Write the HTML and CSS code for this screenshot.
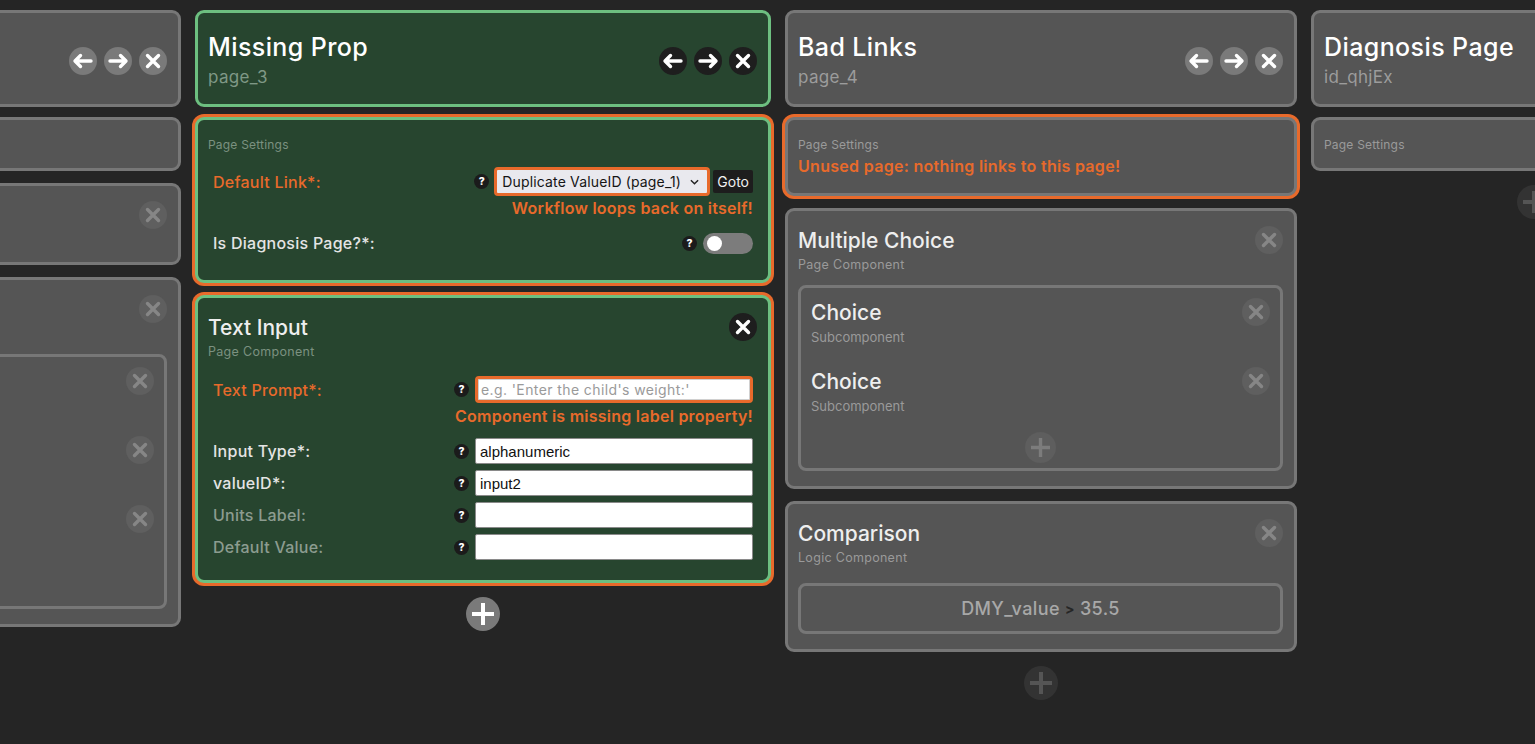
FILE: index.html
```html
<!DOCTYPE html>
<html lang="en">
<head>
<meta charset="utf-8">
<title>Workflow editor</title>
<link rel="stylesheet" href="styles.css">
</head>
<body>
<div class="board">

  <!-- Column A (scrolled mostly off screen; its texts lie outside the view) -->
  <section class="col col-a">
    <div class="card head">
      <div class="head-text">
        <div class="head-title"></div>
        <div class="head-sub"></div>
      </div>
      <div class="btns">
        <svg class="ibtn light" viewBox="0 0 28 28"><circle cx="14" cy="14" r="14"/><path d="M22 14H6.5M11.5 8.5L6 14l5.5 5.5"/></svg>
        <svg class="ibtn light" viewBox="0 0 28 28"><circle cx="14" cy="14" r="14"/><path d="M6 14h15.5M16.5 8.5L22 14l-5.5 5.5"/></svg>
        <svg class="ibtn light" viewBox="0 0 28 28"><circle cx="14" cy="14" r="14"/><path d="M8.5 8.5l11 11M19.5 8.5l-11 11"/></svg>
      </div>
    </div>
    <div class="card settings short">
      <div class="sec-label"></div>
    </div>
    <div class="card comp">
      <div class="comp-head">
        <div class="comp-title"></div>
        <svg class="ibtn faint" viewBox="0 0 28 28"><circle cx="14" cy="14" r="14"/><path d="M8.5 8.5l11 11M19.5 8.5l-11 11"/></svg>
      </div>
      <div class="comp-sub"></div>
    </div>
    <div class="card comp mc">
      <div class="comp-head">
        <div class="comp-title"></div>
        <svg class="ibtn faint" viewBox="0 0 28 28"><circle cx="14" cy="14" r="14"/><path d="M8.5 8.5l11 11M19.5 8.5l-11 11"/></svg>
      </div>
      <div class="comp-sub"></div>
      <div class="subbox">
        <div class="choice">
          <div class="comp-head"><div class="comp-title"></div><svg class="ibtn faint" viewBox="0 0 28 28"><circle cx="14" cy="14" r="14"/><path d="M8.5 8.5l11 11M19.5 8.5l-11 11"/></svg></div>
          <div class="comp-sub"></div>
        </div>
        <div class="choice">
          <div class="comp-head"><div class="comp-title"></div><svg class="ibtn faint" viewBox="0 0 28 28"><circle cx="14" cy="14" r="14"/><path d="M8.5 8.5l11 11M19.5 8.5l-11 11"/></svg></div>
          <div class="comp-sub"></div>
        </div>
        <div class="choice">
          <div class="comp-head"><div class="comp-title"></div><svg class="ibtn faint" viewBox="0 0 28 28"><circle cx="14" cy="14" r="14"/><path d="M8.5 8.5l11 11M19.5 8.5l-11 11"/></svg></div>
          <div class="comp-sub"></div>
        </div>
        <svg class="add-sm" viewBox="0 0 31 31"><circle cx="15.5" cy="15.5" r="15.5"/><path d="M15.5 6v19M6 15.5h19"/></svg>
      </div>
    </div>
  </section>

  <!-- Column B: Missing Prop -->
  <section class="col col-b">
    <div class="card head green">
      <div class="head-text">
        <div class="head-title">Missing Prop</div>
        <div class="head-sub">page_3</div>
      </div>
      <div class="btns">
        <svg class="ibtn dark" viewBox="0 0 28 28"><circle cx="14" cy="14" r="14"/><path d="M22 14H6.5M11.5 8.5L6 14l5.5 5.5"/></svg>
        <svg class="ibtn dark" viewBox="0 0 28 28"><circle cx="14" cy="14" r="14"/><path d="M6 14h15.5M16.5 8.5L22 14l-5.5 5.5"/></svg>
        <svg class="ibtn dark" viewBox="0 0 28 28"><circle cx="14" cy="14" r="14"/><path d="M8.5 8.5l11 11M19.5 8.5l-11 11"/></svg>
      </div>
    </div>

    <div class="card settings green err">
      <div class="sec-label">Page Settings</div>
      <div class="frow bad link-row">
        <label>Default Link*:</label>
        <span class="q">?</span>
        <div class="select"><span>Duplicate ValueID (page_1)</span><svg viewBox="0 0 10 6"><path d="M1 1l4 4 4-4"/></svg></div>
        <button class="goto">Goto</button>
      </div>
      <div class="errmsg">Workflow loops back on itself!</div>
      <div class="frow diag-row">
        <label>Is Diagnosis Page?*:</label>
        <span class="q">?</span>
        <div class="toggle"><span class="knob"></span></div>
      </div>
    </div>

    <div class="card comp green err ti">
      <div class="comp-head">
        <div class="comp-title">Text Input</div>
        <svg class="ibtn dark" viewBox="0 0 28 28"><circle cx="14" cy="14" r="14"/><path d="M8.5 8.5l11 11M19.5 8.5l-11 11"/></svg>
      </div>
      <div class="comp-sub">Page Component</div>
      <div class="frow bad prompt-row">
        <label>Text Prompt*:</label>
        <span class="q">?</span>
        <input class="field bad-field" type="text" placeholder="e.g. 'Enter the child's weight:'">
      </div>
      <div class="errmsg">Component is missing label property!</div>
      <div class="frow first-field">
        <label>Input Type*:</label>
        <span class="q">?</span>
        <input class="field" type="text" value="alphanumeric">
      </div>
      <div class="frow next-field">
        <label>valueID*:</label>
        <span class="q">?</span>
        <input class="field" type="text" value="input2">
      </div>
      <div class="frow next-field optional">
        <label>Units Label:</label>
        <span class="q">?</span>
        <input class="field" type="text">
      </div>
      <div class="frow next-field optional">
        <label>Default Value:</label>
        <span class="q">?</span>
        <input class="field" type="text">
      </div>
    </div>

    <svg class="add add-light" viewBox="0 0 34 34"><circle cx="17" cy="17" r="17"/><path d="M17 6v22M6 17h22"/></svg>
  </section>

  <!-- Column C: Bad Links -->
  <section class="col col-c">
    <div class="card head">
      <div class="head-text">
        <div class="head-title">Bad Links</div>
        <div class="head-sub">page_4</div>
      </div>
      <div class="btns">
        <svg class="ibtn light" viewBox="0 0 28 28"><circle cx="14" cy="14" r="14"/><path d="M22 14H6.5M11.5 8.5L6 14l5.5 5.5"/></svg>
        <svg class="ibtn light" viewBox="0 0 28 28"><circle cx="14" cy="14" r="14"/><path d="M6 14h15.5M16.5 8.5L22 14l-5.5 5.5"/></svg>
        <svg class="ibtn light" viewBox="0 0 28 28"><circle cx="14" cy="14" r="14"/><path d="M8.5 8.5l11 11M19.5 8.5l-11 11"/></svg>
      </div>
    </div>

    <div class="card settings err unused">
      <div class="sec-label">Page Settings</div>
      <div class="unused-msg">Unused page: nothing links to this page!</div>
    </div>

    <div class="card comp mc">
      <div class="comp-head">
        <div class="comp-title">Multiple Choice</div>
        <svg class="ibtn faint" viewBox="0 0 28 28"><circle cx="14" cy="14" r="14"/><path d="M8.5 8.5l11 11M19.5 8.5l-11 11"/></svg>
      </div>
      <div class="comp-sub">Page Component</div>
      <div class="subbox">
        <div class="choice">
          <div class="comp-head"><div class="comp-title">Choice</div><svg class="ibtn faint" viewBox="0 0 28 28"><circle cx="14" cy="14" r="14"/><path d="M8.5 8.5l11 11M19.5 8.5l-11 11"/></svg></div>
          <div class="comp-sub">Subcomponent</div>
        </div>
        <div class="choice">
          <div class="comp-head"><div class="comp-title">Choice</div><svg class="ibtn faint" viewBox="0 0 28 28"><circle cx="14" cy="14" r="14"/><path d="M8.5 8.5l11 11M19.5 8.5l-11 11"/></svg></div>
          <div class="comp-sub">Subcomponent</div>
        </div>
        <svg class="add-sm" viewBox="0 0 31 31"><circle cx="15.5" cy="15.5" r="15.5"/><path d="M15.5 6v19M6 15.5h19"/></svg>
      </div>
    </div>

    <div class="card comp cmp">
      <div class="comp-head">
        <div class="comp-title">Comparison</div>
        <svg class="ibtn faint" viewBox="0 0 28 28"><circle cx="14" cy="14" r="14"/><path d="M8.5 8.5l11 11M19.5 8.5l-11 11"/></svg>
      </div>
      <div class="comp-sub">Logic Component</div>
      <div class="expr">DMY_value <span class="op">&gt;</span> 35.5</div>
    </div>

    <svg class="add add-dark" viewBox="0 0 34 34"><circle cx="17" cy="17" r="17"/><path d="M17 6v22M6 17h22"/></svg>
  </section>

  <!-- Column D: Diagnosis Page -->
  <section class="col col-d">
    <div class="card head">
      <div class="head-text">
        <div class="head-title">Diagnosis Page</div>
        <div class="head-sub">id_qhjEx</div>
      </div>
      <div class="btns">
        <svg class="ibtn light" viewBox="0 0 28 28"><circle cx="14" cy="14" r="14"/><path d="M22 14H6.5M11.5 8.5L6 14l5.5 5.5"/></svg>
        <svg class="ibtn light" viewBox="0 0 28 28"><circle cx="14" cy="14" r="14"/><path d="M6 14h15.5M16.5 8.5L22 14l-5.5 5.5"/></svg>
        <svg class="ibtn light" viewBox="0 0 28 28"><circle cx="14" cy="14" r="14"/><path d="M8.5 8.5l11 11M19.5 8.5l-11 11"/></svg>
      </div>
    </div>
    <div class="card settings short">
      <div class="sec-label">Page Settings</div>
    </div>
    <svg class="add add-dark" viewBox="0 0 34 34"><circle cx="17" cy="17" r="17"/><path d="M17 6v22M6 17h22"/></svg>
  </section>

</div>
</body>
</html>
```

FILE: styles.css
```css
* { box-sizing: border-box; }

html, body {
  margin: 0;
  height: 744px;
  overflow: hidden;
  background: #252525;
  font-family: Inter, "Open Sans", sans-serif;
  color: #fff;
}

.board {
  display: flex;
  align-items: flex-start;
  gap: 14px;
  margin-left: -331px;
  padding-top: 10px;
}

.col {
  flex: none;
  display: flex;
  flex-direction: column;
  gap: 10px;
}
.col-a { width: 512px; }
.col-b { width: 576px; }
.col-c { width: 512px; }
.col-d { width: 446px; }

/* cards */
.card {
  background: #555555;
  border: 3px solid #777777;
  border-radius: 9px;
}
.card.green {
  background: #27452f;
  border-color: #6dbf80;
}
.card.err {
  box-shadow: 0 0 0 3px #e86a2b;
}

/* page header card */
.head {
  height: 97px;
  display: flex;
  align-items: center;
  justify-content: space-between;
  padding: 2px 11px 0 10px;
}
.head-title {
  min-height: 30px;
  font-size: 25px;
  line-height: 30px;
  font-weight: 500;
  letter-spacing: 0.4px;
  color: #ffffff;
}
.head-sub {
  min-height: 22px;
  margin-top: 4px;
  font-size: 17px;
  line-height: 22px;
  letter-spacing: 0.3px;
  color: #9c9c9c;
}
.green .head-sub { color: #7f9886; }
.btns {
  display: flex;
  gap: 7px;
  margin-top: 2px;
}

/* icon buttons */
.ibtn {
  width: 28px;
  height: 28px;
  flex: none;
  display: block;
}
.ibtn path {
  fill: none;
  stroke-width: 3.4;
  stroke-linecap: round;
  stroke-linejoin: round;
}
.ibtn.light circle { fill: #7a7a7a; }
.ibtn.light path { stroke: #ffffff; }
.ibtn.dark circle { fill: #1e1e1e; }
.ibtn.dark path { stroke: #ffffff; }
.ibtn.faint circle { fill: #5f5f5f; }
.ibtn.faint path { stroke: #868686; }

/* section label */
.sec-label {
  min-height: 18px;
  font-size: 12px;
  line-height: 18px;
  letter-spacing: 0.2px;
  color: #9a9a9a;
}
.green .sec-label { color: #7b9180; }

.settings {
  padding: 16px 11px 26px 10px;
}
.settings.short { padding-bottom: 14px; }
.settings.unused { padding-bottom: 17px; }

.unused-msg {
  margin-top: 2px;
  font-size: 16px;
  line-height: 20px;
  font-weight: 600;
  letter-spacing: 0.3px;
  color: #e86a2b;
}

/* form rows */
.frow {
  display: flex;
  align-items: center;
  padding-left: 5px;
  margin-right: 4px;
}
.frow label {
  flex: 1;
  font-size: 16px;
  line-height: 22px;
  font-weight: 500;
  letter-spacing: 0.25px;
  color: #e4e4e4;
}
.frow.bad label { color: #e86a2b; }
.frow.optional label { color: #8c9c90; }

.q {
  flex: none;
  width: 15px;
  height: 15px;
  border-radius: 50%;
  background: #1b1b1b;
  color: #fff;
  font-size: 10.5px;
  font-weight: 800;
  line-height: 15px;
  text-align: center;
  margin-right: 6px;
}

.link-row { margin-top: 13px; }
.link-row .q { margin-right: 5px; }
.diag-row { margin-top: 14px; }

.select {
  width: 216px;
  height: 29px;
  border: 3px solid #e86a2b;
  border-radius: 4px;
  background: #e9e9ee;
  display: flex;
  align-items: center;
  justify-content: space-between;
  padding: 0 8px 0 5px;
  font-size: 14px;
  letter-spacing: 0.15px;
  color: #151515;
}
.select svg {
  width: 9px;
  height: 6px;
}
.select path {
  fill: none;
  stroke: #222;
  stroke-width: 1.6;
}
.goto {
  margin-left: 3px;
  height: 23px;
  padding: 0 4px;
  border: none;
  border-radius: 2px;
  background: #1d1d1d;
  color: #f0f0f0;
  font-family: inherit;
  font-size: 14px;
}

.errmsg {
  margin: 2px 4px 0 0;
  text-align: right;
  font-size: 16px;
  line-height: 20px;
  font-weight: 600;
  letter-spacing: 0.25px;
  color: #e86a2b;
}

.toggle {
  width: 50px;
  height: 21px;
  border-radius: 11px;
  background: #7c7c7c;
  display: flex;
  align-items: center;
  padding-left: 4px;
}
.knob {
  width: 15px;
  height: 15px;
  border-radius: 50%;
  background: #ffffff;
}

/* component cards */
.comp {
  margin-top: 2px;
  padding: 15px 11px 14px 10px;
}
.comp-head {
  display: flex;
  align-items: center;
  justify-content: space-between;
  height: 28px;
}
.comp-title {
  font-size: 21px;
  font-weight: 500;
  color: #eeeeee;
}
.comp-sub {
  min-height: 16px;
  margin-top: 3px;
  font-size: 12.5px;
  line-height: 16px;
  letter-spacing: 0.3px;
  color: #9a9a9a;
}
.green .comp-sub { color: #7b9180; }

.ti { padding-bottom: 20px; }
.ti .errmsg { margin-top: 3px; }
.prompt-row { margin-top: 16px; }
.first-field { margin-top: 12px; }
.next-field { margin-top: 6px; }

.field {
  width: 278px;
  height: 26px;
  border: 1px solid #8a8a8a;
  border-radius: 2px;
  background: #ffffff;
  padding: 0 4px;
  font-family: "Liberation Sans", Arial, sans-serif;
  font-size: 15px;
  color: #111;
  outline: none;
}
.field.bad-field {
  height: 27px;
  border: 3px solid #e86a2b;
  border-radius: 4px;
  box-shadow: inset 0 0 0 1px #d0d0d0;
  padding-left: 3px;
}
.field::placeholder {
  font-family: Inter, "Open Sans", sans-serif;
  color: #9a9a9a;
  font-size: 14px;
  letter-spacing: 0.4px;
}

/* nested subcomponent box */
.subbox {
  margin-top: 12px;
  border: 3px solid #777777;
  border-radius: 8px;
  padding: 10px 10px 5px 10px;
  display: flex;
  flex-direction: column;
  gap: 22px;
}
.choice .comp-sub {
  font-size: 13px;
  letter-spacing: 0;
}
.subbox .add-sm { margin-top: -4px; }

.mc { padding-bottom: 15px; }

.add-sm {
  width: 31px;
  height: 31px;
  align-self: center;
}
.add-sm circle { fill: #5e5e5e; }
.add-sm path { stroke: #7c7c7c; stroke-width: 3.4; }

.cmp { padding-bottom: 15px; }
.expr {
  margin-top: 17px;
  height: 51px;
  border: 3px solid #777777;
  border-radius: 8px;
  display: flex;
  align-items: center;
  justify-content: center;
  gap: 5px;
  font-size: 18px;
  font-weight: 500;
  letter-spacing: 0.4px;
  color: #a8a8a8;
}
.expr .op {
  color: #262626;
  font-size: 14px;
  font-weight: 700;
}

/* add buttons below columns */
.add {
  width: 34px;
  height: 34px;
  align-self: center;
  margin-top: 4px;
}
.add path { stroke-width: 4; }
.add-light circle { fill: #7a7a7a; }
.add-light path { stroke: #ffffff; }
.add-dark circle { fill: #333333; }
.add-dark path { stroke: #555555; }
```
